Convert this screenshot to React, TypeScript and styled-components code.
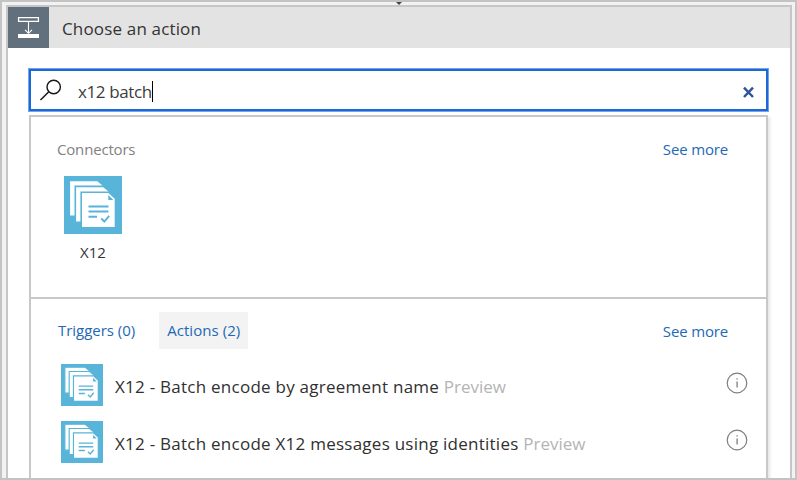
import React from "react";
import styled, { createGlobalStyle } from "styled-components";

const GlobalStyle = createGlobalStyle`
  * { box-sizing: border-box; }
  body { margin: 0; font-family: "Open Sans", "Noto Sans", sans-serif; overflow: hidden; }
  button { font: inherit; border: 0; background: none; padding: 0; }
`;

const Frame = styled.main`
  position: relative;
  width: 797px;
  height: 480px;
  overflow: hidden;
  border: 2px solid #c3c3c3;
  background: #f2f2f2;
  padding: 3px 3px 0 4px;
`;

const ConnectorArrow = styled.svg`
  position: absolute;
  left: 393px;
  top: 0;
  width: 8px;
  height: 3px;
`;

const Card = styled.section`
  height: 480px;
  border: 2px solid #c6c6c6;
  background: #fff;
`;

const Header = styled.header`
  display: flex;
  align-items: flex-start;
  height: 41px;
  background: #e3e3e3;
`;

const HeaderIcon = styled.div`
  width: 41px;
  height: 41px;
  flex: none;
  overflow: hidden;
  background: #62707e;
`;

const Title = styled.h1`
  margin: 10px 0 0 13px;
  font-size: 17px;
  line-height: 24px;
  font-weight: 400;
  letter-spacing: 0.16px;
  color: #333;
`;

const Body = styled.div`
  padding: 21px 22px 0 21px;
`;

const SearchBox = styled.div`
  display: flex;
  align-items: center;
  height: 42px;
  border: 2px solid #1d68d4;
  outline: 0.5px solid #6fa4ee;
  background: #fff;
  padding: 0 11px 0 8px;
`;

const Query = styled.span`
  display: flex;
  align-items: center;
  flex: 1;
  margin-left: 16px;
  padding-top: 3px;
  font-size: 17px;
  line-height: 24px;
  letter-spacing: -0.38px;
  color: #3c3c3c;
`;

const Caret = styled.i`
  width: 1px;
  height: 21px;
  background: #000;
`;

const ClearMark = styled.svg`
  margin-top: 3px;
`;

const Results = styled.div`
  height: 380px;
  margin-top: 4px;
  border: 2px solid #c8c8c8;
  box-shadow: 2px 2px 3px rgba(0, 0, 0, 0.1);
`;

const Connectors = styled.section`
  height: 182px;
  border-bottom: 2px solid #c8c8c8;
  padding: 20px 38px 0 26px;
`;

const Operations = styled.section`
  padding: 13px 18px 0 19px;
`;

const Bar = styled.div<{ $end?: number }>`
  display: flex;
  align-items: center;
  justify-content: space-between;
  padding-right: ${(p) => p.$end ?? 0}px;
`;

const SectionLabel = styled.h2`
  margin: 0;
  font-size: 15px;
  line-height: 24px;
  font-weight: 400;
  letter-spacing: -0.18px;
  color: #828282;
`;

const SeeMore = styled.button`
  font-size: 15px;
  line-height: 24px;
  letter-spacing: -0.16px;
  color: #2269b5;
`;

const Tile = styled.div`
  display: flex;
  flex-direction: column;
  align-items: center;
  width: 58px;
  margin: 15px 0 0 7px;
`;

const TileName = styled.span`
  margin-top: 6px;
  font-size: 15px;
  line-height: 24px;
  color: #333;
`;

const Tabs = styled.div`
  display: flex;
  gap: 16px;
`;

const Tab = styled.button<{ $active?: boolean }>`
  height: 37px;
  padding: 0 8px 1px;
  font-size: 15px;
  letter-spacing: ${(p) => (p.$active ? "0.06px" : "-0.03px")};
  color: #2269b5;
  background: ${(p) => (p.$active ? "#f3f3f3" : "transparent")};
`;

const Rows = styled.ul`
  list-style: none;
  margin: 15px 0 0;
  padding: 0 0 0 11px;
  display: grid;
  gap: 15px;
`;

const Row = styled.li`
  display: flex;
  align-items: center;
  height: 42px;
`;

const RowName = styled.span`
  flex: 1;
  margin-left: 12px;
  padding-top: 3px;
  font-size: 17px;
  line-height: 24px;
  letter-spacing: 0.25px;
  white-space: nowrap;
  color: #303030;
`;

const Preview = styled.span`
  letter-spacing: 0;
  color: #b4b4b4;
`;

const InfoMark = styled.svg`
  margin-bottom: 4px;
`;

function DocumentsIcon({ size }: { size: number }) {
  return (
    <svg width={size} height={size} viewBox="0 0 58 58">
      <path fill="#59b4d9" d="M0 0h58v58H0z" />
      <g fill="#fff" stroke="#59b4d9" strokeWidth="1.6">
        <path d="M5.3 4.5H33.5L39 9V40.3H5.3z" />
        <path d="M11.3 10.4H39.5L45 15V46.2H11.3z" />
        <path d="M17.2 16.3H45L51.5 22.5V51.7H17.2z" />
      </g>
      <path d="M44.3 19v5h5z" fill="#59b4d9" />
      <path
        d="M24.5 30.5H44.5M24.5 35.5H44.5M24.5 40.7H33M37.3 42.5L40.3 45.5L45.2 39.8"
        fill="none"
        stroke="#59b4d9"
        strokeWidth="1.9"
      />
    </svg>
  );
}

function StepIcon() {
  return (
    <svg width="41" height="42" viewBox="0 0 41 42" fill="none" stroke="#fff">
      <path d="M10.6 10.6H30.4V14.4H10.6z" strokeWidth="1.3" />
      <path d="M20.5 15V26M17 22.8L20.5 26.3L24 22.8" strokeWidth="1.1" />
      <path d="M10 29H31" strokeWidth="4" />
    </svg>
  );
}

function SearchIcon() {
  return (
    <svg width="23" height="24" viewBox="0 0 23 24" fill="none" stroke="#161616">
      <circle cx="14.7" cy="9" r="6.7" strokeWidth="1.4" />
      <path d="M9.8 13.7L1.5 22" strokeWidth="1.5" />
    </svg>
  );
}

function ClearIcon() {
  return (
    <ClearMark width="13" height="12" viewBox="0 0 13 12" fill="none" stroke="#2f5597">
      <path d="M2 1.7L11 11M11 1.7L2 11" strokeWidth="2.5" />
    </ClearMark>
  );
}

function Info() {
  return (
    <InfoMark width="22" height="22" viewBox="0 0 22 22" fill="none" stroke="#7d7d7d">
      <circle cx="11" cy="11" r="9.8" strokeWidth="1.2" />
      <path d="M11.1 9.4V15.6M11.1 6.2V7.6" strokeWidth="1.3" />
    </InfoMark>
  );
}

const actions = [
  "X12 - Batch encode by agreement name",
  "X12 - Batch encode X12 messages using identities",
];

export default function App() {
  return (
    <Frame>
      <GlobalStyle />
      <ConnectorArrow viewBox="0 0 8 3">
        <path d="M1 0H7L4 3z" fill="#444" />
      </ConnectorArrow>
      <Card>
        <Header>
          <HeaderIcon>
            <StepIcon />
          </HeaderIcon>
          <Title>Choose an action</Title>
        </Header>
        <Body>
          <SearchBox>
            <SearchIcon />
            <Query>
              x12 batch
              <Caret />
            </Query>
            <ClearIcon />
          </SearchBox>
          <Results>
            <Connectors>
              <Bar>
                <SectionLabel>Connectors</SectionLabel>
                <SeeMore>See more</SeeMore>
              </Bar>
              <Tile>
                <DocumentsIcon size={58} />
                <TileName>X12</TileName>
              </Tile>
            </Connectors>
            <Operations>
              <Bar $end={20}>
                <Tabs>
                  <Tab>Triggers (0)</Tab>
                  <Tab $active>Actions (2)</Tab>
                </Tabs>
                <SeeMore>See more</SeeMore>
              </Bar>
              <Rows>
                {actions.map((name) => (
                  <Row key={name}>
                    <DocumentsIcon size={42} />
                    <RowName>
                      {name} <Preview>Preview</Preview>
                    </RowName>
                    <Info />
                  </Row>
                ))}
              </Rows>
            </Operations>
          </Results>
        </Body>
      </Card>
    </Frame>
  );
}
